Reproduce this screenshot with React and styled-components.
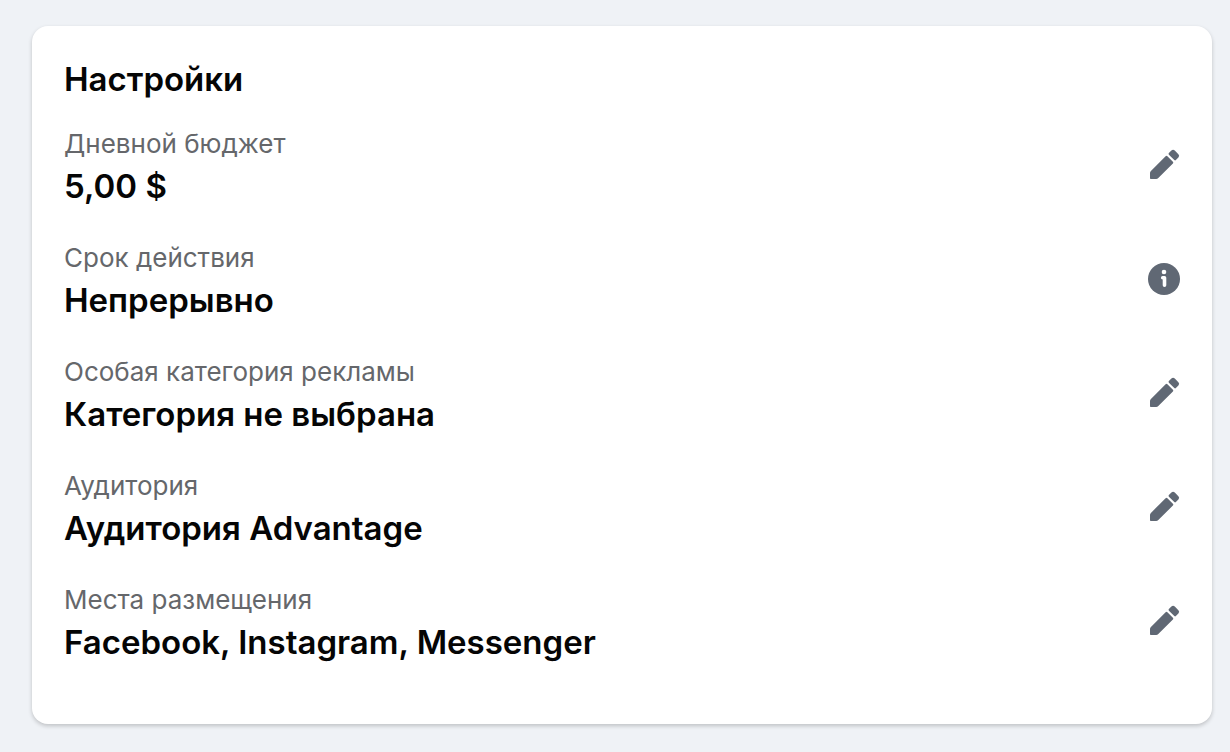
import styled, { createGlobalStyle } from 'styled-components';

const GlobalStyle = createGlobalStyle`
	* {
		box-sizing: border-box;
	}
	body {
		margin: 0;
		background-color: #eff2f6;
		font-family: Inter, 'Noto Sans', sans-serif;
	}
`;
const Page = styled.main`
	padding: 26px 18px 28px 32px;
`;
const Card = styled.section`
	background-color: white;
	border-radius: 16px;
	box-shadow: 0 2px 4px rgba(0, 0, 0, 0.2);
	padding: 32px 32px 61px;
`;
const Title = styled.h1`
	color: #050505;
	font-size: 33px;
	font-weight: 600;
	line-height: 42px;
	margin: 0 0 23px;
`;
const Settings = styled.div`
	display: flex;
	flex-direction: column;
	gap: 30px;
`;
const Row = styled.div`
	display: flex;
	align-items: center;
	justify-content: space-between;
`;
const Label = styled.div`
	color: #65676b;
	font-size: 26px;
	line-height: 42px;
`;
const Value = styled.div`
	color: #050505;
	font-size: 33px;
	font-weight: 600;
	line-height: 42px;
`;
const IconButton = styled.button`
	display: flex;
	background: none;
	border: 0;
	padding: 0;
	color: #606874;
	cursor: pointer;
	svg {
		width: 32px;
		height: 32px;
		fill: currentColor;
	}
`;

const PencilIcon = () => (
	<svg viewBox="0 0 32 32" aria-hidden="true">
		<path d="M17.6 7.2Q18.5 6.3 19.4 7.2L24.9 12.7Q25.8 13.6 24.9 14.5L10.3 29.1Q9.4 30 8.2 30H2.8Q2 30 2 29.2V24Q2 22.8 2.9 21.9Z" />
		<path d="M20.9 5.7Q20.1 4.9 20.9 4.1L23.4 1.6Q25.1 0.1 26.8 1.6L30.4 5.2Q31.9 6.8 30.4 8.5L27.9 11Q27.1 11.8 26.3 11Z" />
	</svg>
);
const InfoIcon = () => (
	<svg viewBox="0 0 32 32" aria-hidden="true">
		<circle cx="16" cy="16" r="16" />
		<circle cx="16" cy="9" r="2.3" fill="white" />
		<path
			d="M14.7 14.7H16.5V22.3"
			stroke="white"
			strokeWidth="3.6"
			strokeLinecap="round"
			strokeLinejoin="round"
			fill="none"
		/>
	</svg>
);

const settings = [
	{ label: 'Дневной бюджет', value: '5,00 $' },
	{ label: 'Срок действия', value: 'Непрерывно', info: true },
	{ label: 'Особая категория рекламы', value: 'Категория не выбрана' },
	{ label: 'Аудитория', value: 'Аудитория Advantage' },
	{ label: 'Места размещения', value: 'Facebook, Instagram, Messenger' },
];

const App = () => {
	return (
		<>
			<GlobalStyle />
			<Page>
				<Card>
					<Title>Настройки</Title>
					<Settings>
						{settings.map(({ label, value, info }) => (
							<Row key={label}>
								<div>
									<Label>{label}</Label>
									<Value>{value}</Value>
								</div>
								<IconButton type="button" aria-label={label}>
									{info ? <InfoIcon /> : <PencilIcon />}
								</IconButton>
							</Row>
						))}
					</Settings>
				</Card>
			</Page>
		</>
	);
};

export default App;
